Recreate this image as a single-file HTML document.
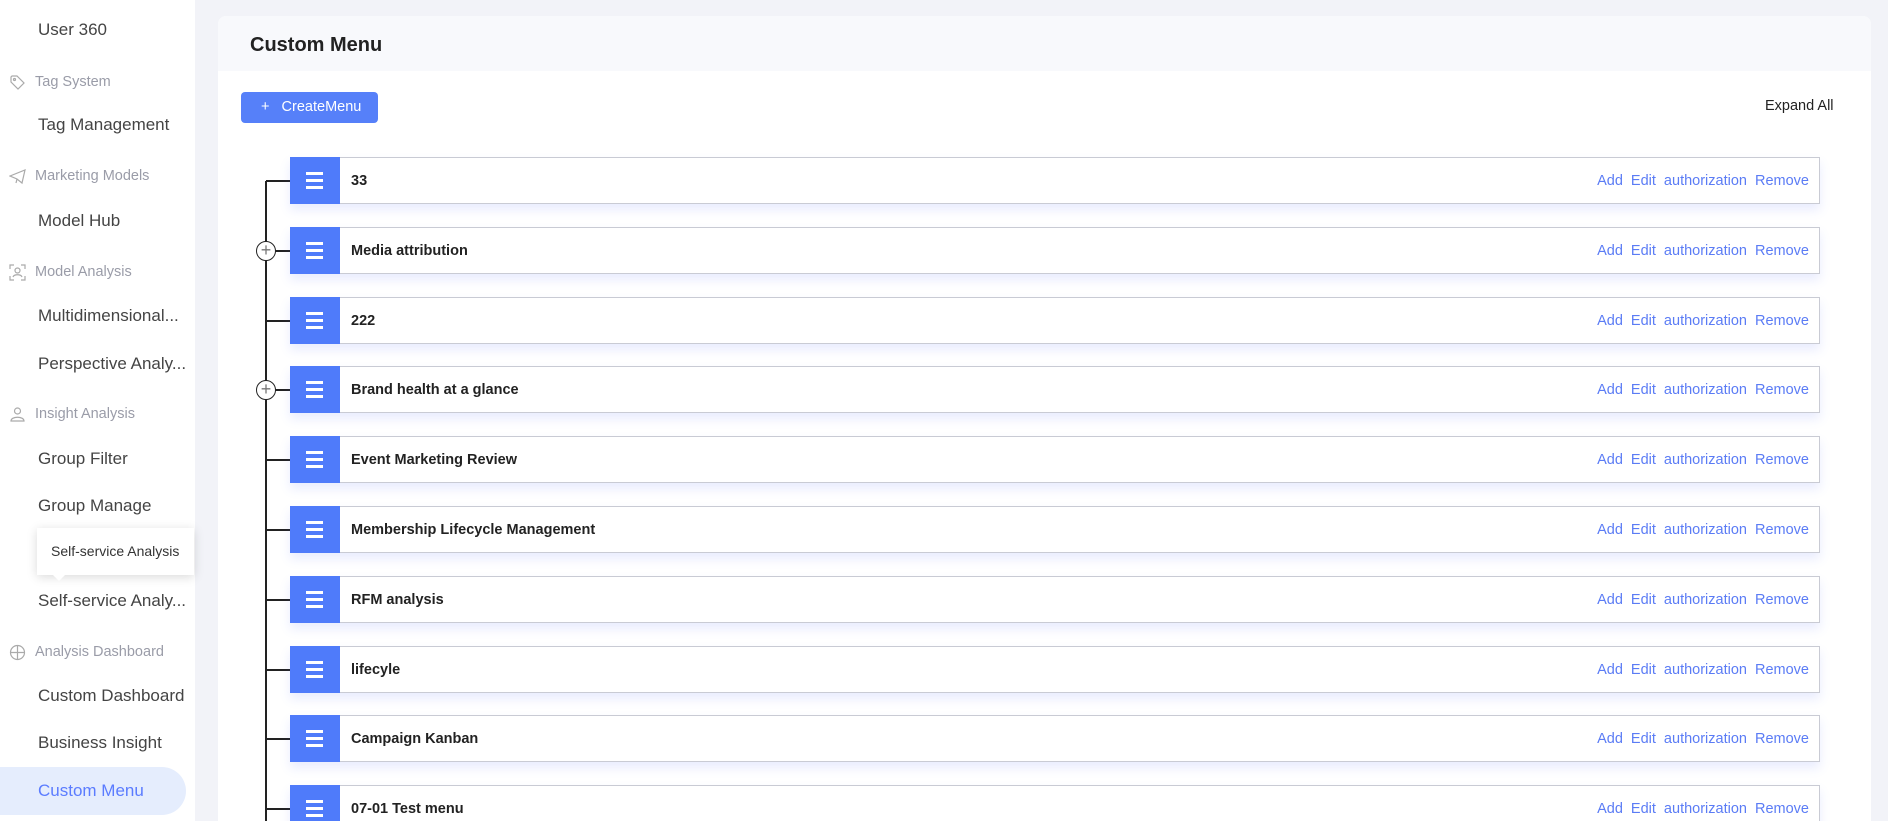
<!DOCTYPE html>
<html style="height:821px;overflow:hidden"><head><meta charset="utf-8"><style>
*{margin:0;padding:0;box-sizing:border-box}
body{width:1888px;height:821px;overflow:hidden;background:#f2f3f8;font-family:"Liberation Sans",sans-serif;position:relative}
.side{position:absolute;left:0;top:0;width:195px;height:821px;background:#fff}
.it{position:absolute;left:38px;font-size:17px;color:#444;line-height:20px}
.gh{position:absolute;left:35px;font-size:14.5px;color:#9a9ca8;line-height:18px}
.gi{position:absolute;left:9px;width:17px;height:17px}
.active{position:absolute;left:0;top:767px;width:186px;height:48px;background:#e5edfd;border-radius:0 24px 24px 0}
.tip{position:absolute;left:37px;top:528px;width:157px;height:47px;background:#fff;box-shadow:0 2px 10px rgba(0,0,0,.15);font-size:14px;color:#333;line-height:47px;padding-left:14px}
.tip:after{content:"";position:absolute;left:16px;bottom:-6px;border:6px solid transparent;border-bottom:0;border-top-color:#fff}
.card{position:absolute;left:218px;top:16px;width:1653px;height:805px;background:#fff;border-radius:8px 8px 0 0;overflow:hidden}
.hd{height:55px;background:#f8f9fc;font-size:20px;font-weight:bold;color:#222;padding:18px 0 0 32px}
.btn{position:absolute;left:23px;top:76px;width:137px;height:31px;background:#5680f9;border-radius:4px;color:#fff;font-size:14.5px;line-height:31px;padding-left:20px}
.exp{position:absolute;left:1547px;top:82px;font-size:14.5px;color:#222}
.vl{position:absolute;left:47px;top:165px;width:1.5px;height:700px;background:#222}
.row{position:absolute;left:72px;width:1530px;height:47px;background:#fff;border:1px solid #c9cbd4;box-shadow:0 6px 10px rgba(86,110,250,.13)}
.ic{position:absolute;left:-1px;top:-1px;width:50px;height:47px;background:#4f7bfa}
.ic i{position:absolute;left:16px;width:17px;height:3px;background:#fff}
.nm{position:absolute;left:60px;top:15px;font-size:14.5px;font-weight:bold;color:#222}
.ac{position:absolute;right:10px;top:15px;font-size:14.5px;color:#5b7cf5;word-spacing:4px}
.hl{position:absolute;left:48px;width:24px;height:1.5px;background:#222}
.pc{position:absolute;left:38px;width:20px;height:20px;border:1.5px solid #222;border-radius:50%;background:#fff;color:#777;font-size:18px;line-height:16px;text-align:center}
</style></head><body>
<div class="side">
<div class="it" style="top:20px">User 360</div>
<svg class="gi" style="top:74px" viewBox="0 0 17 17" fill="none" stroke="#aaa" stroke-width="1.2"><path d="M2 3v5l7 7 6-6-7-7H3z"/><circle cx="5.5" cy="5.5" r="1"/></svg>
<div class="gh" style="top:73px">Tag System</div>
<div class="it" style="top:115px">Tag Management</div>
<svg class="gi" style="top:168px" viewBox="0 0 17 17" fill="none" stroke="#aaa" stroke-width="1.2"><path d="M1 8l15-6-3 13-5-4zM8 11l-1 4"/></svg>
<div class="gh" style="top:167px">Marketing Models</div>
<div class="it" style="top:211px">Model Hub</div>
<svg class="gi" style="top:264px" viewBox="0 0 17 17" fill="none" stroke="#aaa" stroke-width="1.2"><path d="M1 5V1h4M12 1h4v4M16 12v4h-4M5 16H1v-4"/><circle cx="8.5" cy="6.5" r="2.5"/><path d="M4 13c1-3 8-3 9 0"/></svg>
<div class="gh" style="top:263px">Model Analysis</div>
<div class="it" style="top:306px">Multidimensional...</div>
<div class="it" style="top:354px">Perspective Analy...</div>
<svg class="gi" style="top:406px" viewBox="0 0 17 17" fill="none" stroke="#aaa" stroke-width="1.2"><circle cx="8.5" cy="5" r="3"/><path d="M2 15c0-5 13-5 13 0z"/></svg>
<div class="gh" style="top:405px">Insight Analysis</div>
<div class="it" style="top:449px">Group Filter</div>
<div class="it" style="top:496px">Group Manage</div>
<div class="it" style="top:591px">Self-service Analy...</div>
<svg class="gi" style="top:644px" viewBox="0 0 17 17" fill="none" stroke="#aaa" stroke-width="1.2"><circle cx="8.5" cy="8.5" r="7"/><path d="M8.5 1.5v7h7M1.5 8.5h7v7"/></svg>
<div class="gh" style="top:643px">Analysis Dashboard</div>
<div class="it" style="top:686px">Custom Dashboard</div>
<div class="it" style="top:733px">Business Insight</div>
<div class="active"></div>
<div class="it" style="top:781px;color:#5b7cff">Custom Menu</div>
<div class="tip">Self-service Analysis</div>
</div>
<div class="card">
<div class="hd">Custom Menu</div>
<div class="btn">+&nbsp;&nbsp; CreateMenu</div>
<div class="exp">Expand All</div>
<div class="vl"></div>
</div>
<div id="rows" style="position:absolute;left:218px;top:0;width:1653px;height:821px;overflow:hidden"></div>
<script>
var n=["33","Media attribution","222","Brand health at a glance","Event Marketing Review","Membership Lifecycle Management","RFM analysis","lifecyle","Campaign Kanban","07-01 Test menu"];
var h="";
n.forEach(function(t,i){var y=157+Math.round(i*69.8);
h+='<div class="hl" style="top:'+(y+23)+'px"></div>';
if(i==1||i==3)h+='<div class="pc" style="top:'+(y+14)+'px">+</div>';
h+='<div class="row" style="top:'+y+'px"><div class="ic"><i style="top:15px"></i><i style="top:22px"></i><i style="top:29px"></i></div><div class="nm">'+t+'</div><div class="ac">Add Edit authorization Remove</div></div>';});
document.getElementById("rows").innerHTML=h;
</script>
</body></html>
